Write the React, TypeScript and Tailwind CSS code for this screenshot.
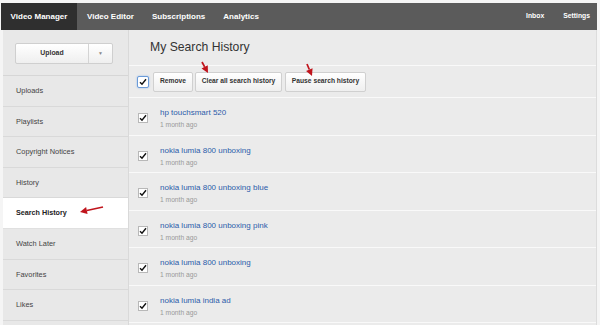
import React from "react";

const sideItems = [
  "Uploads",
  "Playlists",
  "Copyright Notices",
  "History",
  "Search History",
  "Watch Later",
  "Favorites",
  "Likes",
];

const searches = [
  "hp touchsmart 520",
  "nokia lumia 800 unboxing",
  "nokia lumia 800 unboxing blue",
  "nokia lumia 800 unboxing pink",
  "nokia lumia 800 unboxing",
  "nokia lumia india ad",
];

function Check({ focused = false }: { focused?: boolean }) {
  return (
    <span
      className={
        focused
          ? "flex h-[12px] w-[12px] shrink-0 items-center justify-center rounded-[2px] border border-[#6b9bd8] bg-white shadow-[0_0_2px_#8fb6e8]"
          : "mt-[7px] flex h-[10px] w-[10px] shrink-0 items-center justify-center border border-[#b8b8b8] bg-white"
      }
    >
      <svg width="8" height="8" viewBox="0 0 8 8">
        <path d="M1 4.2 L3 6.3 L7 1.2" fill="none" stroke="#111" strokeWidth="1.4" />
      </svg>
    </span>
  );
}

function Arrow({ className, x1, y1, x2, y2 }: { className: string; x1: number; y1: number; x2: number; y2: number }) {
  const a = Math.atan2(y2 - y1, x2 - x1);
  const hx = x2 - Math.cos(a) * 7;
  const hy = y2 - Math.sin(a) * 7;
  const px = Math.cos(a + Math.PI / 2) * 3.5;
  const py = Math.sin(a + Math.PI / 2) * 3.5;
  return (
    <svg className={className} width="30" height="20" viewBox="0 0 30 20">
      <line x1={x1} y1={y1} x2={hx} y2={hy} stroke="#c0141c" strokeWidth="1.7" />
      <polygon points={`${x2},${y2} ${hx + px},${hy + py} ${hx - px},${hy - py}`} fill="#c0141c" />
    </svg>
  );
}

export default function App() {
  return (
    <div
      className="relative flex h-[325px] w-[600px] flex-col overflow-hidden bg-[#f5f5f5] text-[#333]"
      style={{ fontFamily: '"Liberation Sans", Arial, sans-serif' }}
    >
      {/* top nav */}
      <div className="ml-[1px] mr-[3px] mt-[3px] flex h-[27px] shrink-0 items-center bg-[#5b5b5b] text-white font-bold">
        <div className="flex h-full w-[76px] items-center justify-center bg-[#2f2f2f] text-[8px]">Video Manager</div>
        <div className="ml-[10px] text-[8px]">Video Editor</div>
        <div className="ml-[18px] text-[8px]">Subscriptions</div>
        <div className="ml-[18px] text-[8px]">Analytics</div>
        <div className="ml-auto text-[6.8px]">Inbox</div>
        <div className="ml-[19px] mr-[7px] text-[6.8px]">Settings</div>
      </div>

      <div className="ml-[3px] mr-[3px] flex flex-1">
        {/* sidebar */}
        <div className="flex w-[126px] shrink-0 flex-col border-r border-[#d9d9d9] bg-[#e8e8e8]">
          <div className="h-[46px] shrink-0 border-b border-[#d6d6d6] pl-[12px] pt-[13px]">
            <div className="flex h-[21px] w-[98px] rounded-[2px] border border-[#cfcfcf] bg-gradient-to-b from-white to-[#efefef] text-[6.9px] font-bold text-[#333]">
              <div className="flex flex-1 items-center justify-center border-r border-[#d4d4d4]">Upload</div>
              <div className="flex w-[23px] items-center justify-center text-[5px] text-[#888]">▼</div>
            </div>
          </div>
          {sideItems.map((item) => (
            <div
              key={item}
              className={
                item === "Search History"
                  ? "flex h-[30.6px] shrink-0 items-center border-b border-[#e0e0e0] bg-white pl-[13px] text-[7.2px] font-bold text-[#222]"
                  : "flex h-[30.6px] shrink-0 items-center border-b border-[#d9d9d9] pl-[13px] text-[7.4px] text-[#444]"
              }
            >
              {item}
            </div>
          ))}
        </div>

        {/* main */}
        <div className="flex flex-1 flex-col border-r border-[#dcdcdc] bg-[#ebebeb]">
          <div className="flex h-[36px] shrink-0 items-center border-b border-[#f9f9f9] pl-[21px] text-[12.2px] text-[#333]">
            My Search History
          </div>
          <div className="flex h-[32px] shrink-0 items-center border-b border-[#f9f9f9] pl-[8px]">
            <Check focused />
            <div className="ml-[4px] flex h-[20px] w-[40px] items-center justify-center rounded-[2px] border border-[#d0d0d0] bg-gradient-to-b from-white to-[#efefef] text-[6.7px] font-bold text-[#333]">
              Remove
            </div>
            <div className="ml-[2px] flex h-[20px] w-[87px] items-center justify-center rounded-[2px] border border-[#d0d0d0] bg-gradient-to-b from-white to-[#efefef] text-[6.7px] font-bold text-[#333]">
              Clear all search history
            </div>
            <div className="ml-[3px] flex h-[20px] w-[81px] items-center justify-center rounded-[2px] border border-[#d0d0d0] bg-gradient-to-b from-white to-[#efefef] text-[6.7px] font-bold text-[#333]">
              Pause search history
            </div>
          </div>
          {searches.map((s, i) => (
            <div key={i} className="flex h-[37.5px] shrink-0 items-start border-b border-[#f9f9f9] pl-[9px] pt-[8px]">
              <Check />
              <div className="ml-[12px] flex flex-col">
                <span className="text-[8px] leading-[13px] text-[#2c5caa]">{s}</span>
                <span className="text-[6.7px] leading-[11px] text-[#999]">1 month ago</span>
              </div>
            </div>
          ))}
        </div>
      </div>

      {/* annotation arrows */}
      <Arrow className="absolute left-[78px] top-[202px]" x1={25} y1={5} x2={2} y2={10} />
      <Arrow className="absolute left-[195px] top-[59px]" x1={7} y1={3} x2={13} y2={14} />
      <Arrow className="absolute left-[300px] top-[62px]" x1={7} y1={2} x2={12} y2={14} />
    </div>
  );
}
